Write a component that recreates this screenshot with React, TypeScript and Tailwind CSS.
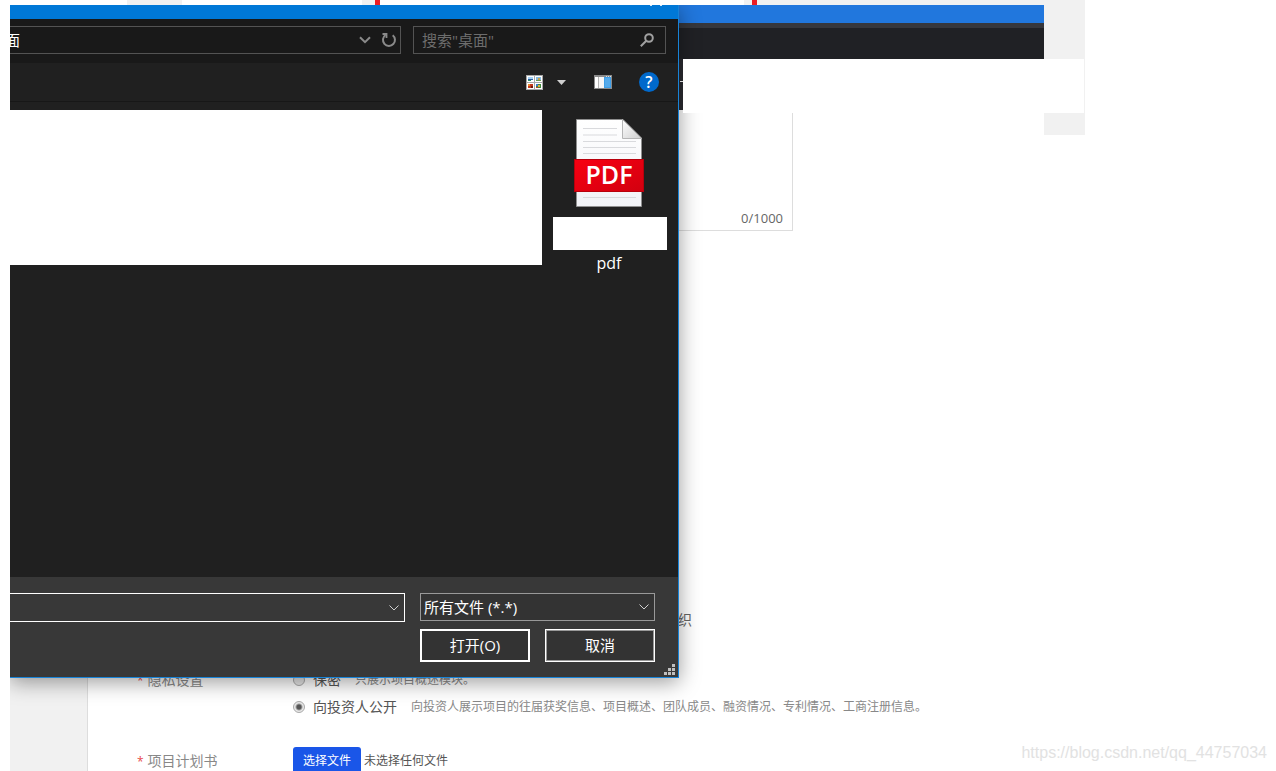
const privacyOptions = [
  { id: "private", label: "保密", hint: "只展示项目概述模块。", checked: false },
  {
    id: "investors",
    label: "向投资人公开",
    hint: "向投资人展示项目的往届获奖信息、项目概述、团队成员、融资情况、专利情况、工商注册信息。",
    checked: true,
  },
]

function HistoryIcon() {
  return (
    <svg width="12" height="8" viewBox="0 0 12 8" fill="none" stroke="#8a8a8a" strokeWidth="2">
      <path d="M1 1.200L6 6.200L11 1.200" />
    </svg>
  )
}

function DropdownIcon() {
  return (
    <svg width="10" height="6" viewBox="0 0 10 6" fill="none" stroke="#d0d0d0">
      <path d="M0.500 0.500L5 5L9.500 0.500" />
    </svg>
  )
}

function RefreshIcon() {
  return (
    <svg width="16" height="16" viewBox="0 0 16 16" fill="none" stroke="#8a8a8a" strokeWidth="2">
      <path d="M11.700 3.200A6 6 0 1 1 4.500 3" />
      <path d="M1.500 2H5.500V6" strokeWidth="1.800" />
    </svg>
  )
}

function SearchIcon() {
  return (
    <svg width="14" height="14" viewBox="0 0 14 14" fill="none" stroke="#a0a0a0" strokeWidth="2">
      <circle cx="9" cy="5" r="3.8" />
      <path d="M6.3 7.7L0.8 13.2" />
    </svg>
  )
}

function ViewIcon() {
  return (
    <svg width="17" height="15" viewBox="0 0 17 15" shapeRendering="crispEdges">
      <rect width="17" height="15" fill="#a8a8a8" />
      <rect x="1" y="1" width="7" height="6" fill="#fff" />
      <rect x="9" y="1" width="7" height="6" fill="#fff" />
      <rect x="1" y="8" width="7" height="6" fill="#fff" />
      <rect x="9" y="8" width="7" height="6" fill="#fff" />
      <rect x="2" y="2" width="5" height="2" fill="#a5d2f5" />
      <rect x="2" y="4" width="5" height="1" fill="#2d5f9e" />
      <rect x="2" y="5" width="3" height="1" fill="#2f8f6b" />
      <rect x="10" y="2" width="5" height="4" fill="#86b9dd" />
      <rect x="12" y="3" width="2" height="2" fill="#c9a44c" />
      <rect x="10" y="5" width="5" height="1" fill="#6c9a55" />
      <rect x="2" y="9" width="5" height="4" fill="#c43a1c" />
      <rect x="2" y="9" width="2" height="2" fill="#e98a2e" />
      <rect x="5" y="11" width="2" height="2" fill="#6e1c10" />
      <rect x="10" y="9" width="5" height="4" fill="#3f8a3c" />
      <rect x="10" y="9" width="2" height="2" fill="#3f7fd0" />
      <rect x="12" y="10" width="2" height="2" fill="#e2b23a" />
      <rect x="10" y="12" width="2" height="1" fill="#c0392b" />
    </svg>
  )
}

function PreviewPaneIcon() {
  return (
    <svg width="18" height="14" viewBox="0 0 18 14" shapeRendering="crispEdges">
      <rect width="18" height="14" fill="#8b8b8b" />
      <rect x="12" y="1" width="1" height="1" fill="#ddd" />
      <rect x="14" y="1" width="1" height="1" fill="#ddd" />
      <rect x="16" y="1" width="1" height="1" fill="#ddd" />
      <rect x="1" y="2" width="3" height="11" fill="#fff" />
      <rect x="4" y="2" width="1" height="11" fill="#b5b5b5" />
      <rect x="5" y="2" width="5" height="11" fill="#f7f7f7" />
      <rect x="10" y="2" width="7" height="11" fill="#3f9fe8" />
      <rect x="11" y="3" width="5" height="9" fill="#55abec" />
    </svg>
  )
}

function PdfIcon() {
  return (
    <svg width="72" height="90" viewBox="0 0 72 90">
      <defs>
        <linearGradient id="sheet" x1="0" y1="0" x2="0" y2="1">
          <stop offset="0" stopColor="#ffffff" />
          <stop offset="1" stopColor="#f1f2f6" />
        </linearGradient>
        <linearGradient id="fold" x1="0" y1="0" x2="1" y2="1">
          <stop offset="0" stopColor="#ffffff" />
          <stop offset="1" stopColor="#cfcfcf" />
        </linearGradient>
        <linearGradient id="band" x1="0" y1="0" x2="1" y2="1">
          <stop offset="0" stopColor="#f80012" />
          <stop offset="1" stopColor="#d2000f" />
        </linearGradient>
      </defs>
      <path d="M2.500 1.500H49L67.500 20V88.500H2.500Z" fill="url(#sheet)" stroke="#8f8f8f" />
      <path d="M48.500 1.500V20.500H67.500Z" fill="url(#fold)" stroke="#b5b5b5" />
      <path
        d="M9 10.500H43M9 17H43M9 23.500H62M9 29.500H62M9 35.500H62M9 79.500H62"
        stroke="#d9dadd"
        fill="none"
      />
      <rect x="0.500" y="41.500" width="69" height="32" fill="url(#band)" stroke="#b8000c" />
      <text
        x="35"
        y="66"
        textAnchor="middle"
        fill="#fff"
        className="font-['Open_Sans',sans-serif] text-[25px] font-semibold"
      >
        PDF
      </text>
    </svg>
  )
}

function ResizeGrip() {
  return (
    <svg width="11" height="11" viewBox="0 0 11 11" fill="#bfbfbf" shapeRendering="crispEdges">
      <path d="M8 0h3v3h-3zM4 4h3v3h-3zM8 4h3v3h-3zM0 8h3v3h-3zM4 8h3v3h-3zM8 8h3v3h-3z" />
    </svg>
  )
}

function FileDialog() {
  return (
    <div
      role="dialog"
      aria-label="打开"
      className="absolute top-0 left-0 z-10 flex h-[673px] w-[669px] flex-col overflow-hidden border-r border-b border-[#1883d7] bg-[#202020] text-[15px] text-white shadow-[0_4px_20px_rgba(0,0,0,0.4)]"
    >
      <div className="flex h-[14px] shrink-0 justify-end bg-[#0078d7] pr-4">
        <svg width="12" height="1" viewBox="0 0 12 1" fill="#d5e8f8">
          <path d="M0 0h2v1h-2zM10 0h2v1h-2z" />
        </svg>
      </div>

      <div className="flex h-[44px] shrink-0 items-start gap-3 bg-[#191919] pt-[7px] pr-3">
        <div className="flex h-[28px] flex-1 items-center border border-l-0 border-[#535353]">
          <span className="-ml-[5px] flex-1 leading-5">面</span>
          <button type="button" aria-label="历史记录" className="mr-[10px]">
            <HistoryIcon />
          </button>
          <button type="button" aria-label="刷新" className="mr-[3px]">
            <RefreshIcon />
          </button>
        </div>
        <div className="flex h-[28px] w-[253px] items-center border border-[#535353] pr-[11px] pl-2">
          <input
            type="text"
            aria-label="搜索"
            placeholder={'搜索"桌面"'}
            className="min-w-0 flex-1 bg-transparent outline-none placeholder:text-[#6d6d6d]"
          />
          <SearchIcon />
        </div>
      </div>

      <div className="flex h-[39px] shrink-0 items-center justify-end border-b border-[#171717] pr-[19px]">
        <button type="button" aria-label="视图">
          <ViewIcon />
        </button>
        <button type="button" aria-label="更多选项" className="ml-[14px]">
          <svg width="9" height="5" viewBox="0 0 9 5" fill="#d0d0d0">
            <path d="M0 0H9L4.5 5Z" />
          </svg>
        </button>
        <button type="button" aria-label="预览窗格" className="ml-7">
          <PreviewPaneIcon />
        </button>
        <button
          type="button"
          aria-label="帮助"
          className="ml-[27px] flex size-5 items-center justify-center rounded-full bg-[#0069cc] text-base font-semibold"
        >
          ?
        </button>
      </div>

      <div className="flex flex-1 items-start gap-[11px] pt-2">
        <div className="h-[155px] w-[532px] bg-white" />
        <div className="flex w-[114px] flex-col items-center pt-2">
          <PdfIcon />
          <div className="mt-[9px] h-[33px] w-full bg-white" />
          <span className="mt-[3px] pr-[2px] text-base leading-5">pdf</span>
        </div>
      </div>

      <div className="flex h-[100px] shrink-0 items-start gap-[15px] bg-[#383838] pt-4">
        <div className="flex h-[29px] flex-1 items-center border border-l-0 border-white pr-[5px]">
          <input type="text" aria-label="文件名" className="min-w-0 flex-1 bg-transparent outline-none" />
          <DropdownIcon />
        </div>
        <div className="flex w-[235px] flex-col gap-2">
          <div className="relative">
            <select
              aria-label="文件类型"
              className="block h-[28px] w-full appearance-none rounded-none border border-[#999] bg-[#333] pl-[3px] outline-none"
            >
              <option>所有文件 (*.*)</option>
            </select>
            <div className="pointer-events-none absolute inset-y-0 right-[6px] flex items-center">
              <DropdownIcon />
            </div>
          </div>
          <div className="flex justify-between">
            <button type="button" className="h-[33px] w-[110px] border-2 border-white bg-[#333]">
              打开(O)
            </button>
            <button
              type="button"
              className="h-[33px] w-[110px] border border-white bg-[#333] inset-ring inset-ring-[#999]"
            >
              取消
            </button>
          </div>
        </div>
        <div className="-ml-[6px] self-end pr-[3px] pb-[2px]">
          <ResizeGrip />
        </div>
      </div>
    </div>
  )
}

function RequiredLabel({ children }: { children: string }) {
  return (
    <span className="w-[156px] shrink-0 text-sm text-[#888]">
      <span className="mr-1 text-xs text-[#e84c4c]">*</span>
      {children}
    </span>
  )
}

function ProjectForm() {
  return (
    <form className="flex-1 pl-[49px] text-[#555]">
      <div className="relative ml-[156px] h-[118px] w-[500px]">
        <textarea
          aria-label="项目概述"
          className="block h-full w-full resize-none border border-t-0 border-[#ddd] bg-transparent outline-none"
        />
        <span className="absolute right-[10px] bottom-[5px] text-[13px] leading-4 text-[#666]">0/1000</span>
      </div>

      <p className="mt-[379px] pl-[541px] text-sm text-[#666]">织</p>

      <div role="radiogroup" aria-label="隐私设置" className="mt-10 flex">
        <RequiredLabel>隐私设置</RequiredLabel>
        <div className="flex flex-col gap-[7px]">
          {privacyOptions.map((option) => (
            <div key={option.id} className="flex h-5 items-center">
              <input
                type="radio"
                name="privacy"
                id={option.id}
                defaultChecked={option.checked}
                className="size-3 appearance-none rounded-full border border-[#aaa] bg-[#e8e8e8] checked:bg-[radial-gradient(circle,#555_0_2px,#e8e8e8_4px)]"
              />
              <label htmlFor={option.id} className="ml-2 text-sm">
                {option.label}
              </label>
              <span className="ml-[14px] text-xs leading-5 whitespace-nowrap text-[#888]">{option.hint}</span>
            </div>
          ))}
        </div>
      </div>

      <div className="mt-[30px] flex items-center">
        <RequiredLabel>项目计划书</RequiredLabel>
        <button type="button" className="h-[27px] w-[68px] rounded-[3px] bg-[#1a56e8] text-xs text-white">
          选择文件
        </button>
        <span className="ml-[3px] text-xs">未选择任何文件</span>
      </div>
    </form>
  )
}

export default function App() {
  return (
    <div className="relative flex h-screen flex-col overflow-hidden bg-white font-['Open_Sans','Noto_Sans_CJK_SC',sans-serif]">
      <div className="flex h-[5px] shrink-0">
        <div className="w-[127px]" />
        <div className="w-[55px] bg-[#f1f1f1]" />
        <div className="w-[180px]" />
        <div className="w-[13px] bg-[#f1f1f1]" />
        <div className="w-[5px] bg-[#ed1c24]" />
        <div className="w-[364px]" />
        <div className="w-2 bg-[#f1f1f1]" />
        <div className="w-[5px] bg-[#ed1c24]" />
        <div className="mr-[191px] flex-1 bg-[#f1f1f1]" />
      </div>

      <div className="relative ml-[10px] flex min-h-0 flex-1 overflow-hidden">
        <div className="flex min-w-0 flex-1 flex-col">
          <div className="h-[18px] shrink-0 bg-[#2177dd]" />
          <div className="h-[5px] shrink-0 bg-[#36373c]" />
          <div className="h-[31px] shrink-0 bg-[#202125]" />
          <div className="flex h-[54px] shrink-0 items-start">
            <div className="flex h-[51px] w-[673px] items-start justify-end bg-[#2c2b31] pt-[22px]">
              <div className="h-px w-[3px] bg-white" />
            </div>
            <div className="relative z-20 h-full flex-1 bg-white" />
          </div>
          <div className="flex flex-1">
            <aside className="w-[78px] border-r border-[#ddd] bg-[#f1f1f1]" />
            <ProjectForm />
          </div>
        </div>
        <div className="w-[41px] shrink-0">
          <div className="h-[54px] bg-[#f1f1f1]" />
          <div className="h-[54px] border-r border-[#f1f1f1]" />
          <div className="h-[22px] bg-[#f1f1f1]" />
        </div>
        <div className="w-[191px] shrink-0" />
        <FileDialog />
      </div>

      <p className="absolute right-[9px] bottom-[6px] font-['Liberation_Sans',sans-serif] text-base text-[#e2e2e2]">
        https://blog.csdn.net/qq_44757034
      </p>
    </div>
  )
}
